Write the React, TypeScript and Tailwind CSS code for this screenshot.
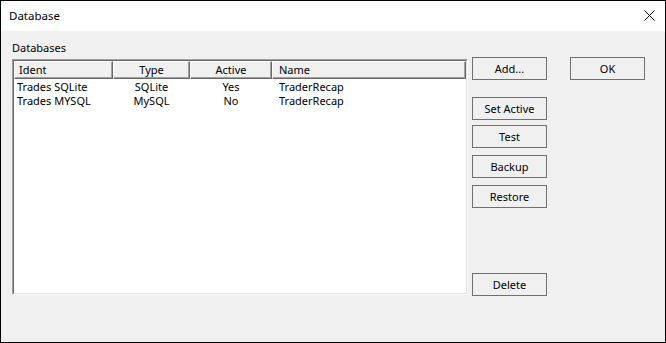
import React from 'react';

interface DbRow {
    ident: string;
    type: string;
    active: string;
    name: string;
}

const rows: DbRow[] = [
    { ident: 'Trades SQLite', type: 'SQLite', active: 'Yes', name: 'TraderRecap' },
    { ident: 'Trades MYSQL', type: 'MySQL', active: 'No', name: 'TraderRecap' },
];

const font = { fontFamily: '"Noto Sans", "Open Sans", sans-serif' };

const Btn: React.FC<{ label: string; className?: string }> = ({ label, className }) => (
    <button
        className={`w-[75px] h-[23px] border border-[#707070] bg-[#f0f0f0] text-[11px] leading-none text-black flex items-center justify-center ${className ?? ''}`}
    >
        {label}
    </button>
);

const headerCell =
    'h-[18px] pb-[2px] border-t border-l border-t-white border-l-white border-b border-r border-b-[#696969] border-r-[#696969] shadow-[inset_-1px_-1px_0_#a0a0a0] flex items-center text-[11px] leading-none';

const App: React.FC = () => {
    return (
        <div className="w-[666px] h-[343px] border border-black flex flex-col bg-[#f0f0f0] text-black" style={font}>
            {/* title bar */}
            <div className="h-[30px] bg-white flex items-center justify-between pl-[8px] pr-[10px]">
                <span className="text-[11.5px] leading-none">Database</span>
                <svg width="11" height="11" viewBox="0 0 11 11" className="-mt-[1px]">
                    <path d="M0.5 0.5 L10.5 10.5 M10.5 0.5 L0.5 10.5" stroke="#000" strokeWidth="1" />
                </svg>
            </div>

            <div className="flex-1 flex">
                {/* list side */}
                <div className="pl-[11px] pt-[9px]">
                    <div className="h-[15px] leading-[15px] text-[11px] mb-[4px]">Databases</div>
                    <div className="w-[456px] h-[236px] border border-t-[#a0a0a0] border-l-[#a0a0a0] border-b-white border-r-white">
                        <div className="w-full h-full border border-t-[#696969] border-l-[#696969] border-b-[#e3e3e3] border-r-[#e3e3e3] bg-white">
                            <div className="flex bg-[#f0f0f0]">
                                <div className={`${headerCell} w-[99px] pl-[4px]`}>Ident</div>
                                <div className={`${headerCell} w-[77px] justify-center`}>Type</div>
                                <div className={`${headerCell} w-[82px] justify-center`}>Active</div>
                                <div className={`${headerCell} w-[194px] pl-[6px]`}>Name</div>
                            </div>
                            <div className="pt-[1px]">
                                {rows.map((r) => (
                                    <div key={r.ident} className="flex h-[14px] text-[11px] leading-[14px]">
                                        <div className="w-[99px] pl-[3px]">{r.ident}</div>
                                        <div className="w-[77px] text-center">{r.type}</div>
                                        <div className="w-[82px] text-center">{r.active}</div>
                                        <div className="w-[194px] pl-[7px]">{r.name}</div>
                                    </div>
                                ))}
                            </div>
                        </div>
                    </div>
                </div>

                {/* action buttons */}
                <div className="ml-[4px] pt-[26px] flex flex-col">
                    <Btn label="Add..." />
                    <Btn label="Set Active" className="mt-[17px]" />
                    <Btn label="Test" className="mt-[5px]" />
                    <Btn label="Backup" className="mt-[7px]" />
                    <Btn label="Restore" className="mt-[7px]" />
                    <Btn label="Delete" className="mt-[65px]" />
                </div>

                <div className="ml-[23px] pt-[26px]">
                    <Btn label="OK" />
                </div>
            </div>
        </div>
    );
};

export default App;
